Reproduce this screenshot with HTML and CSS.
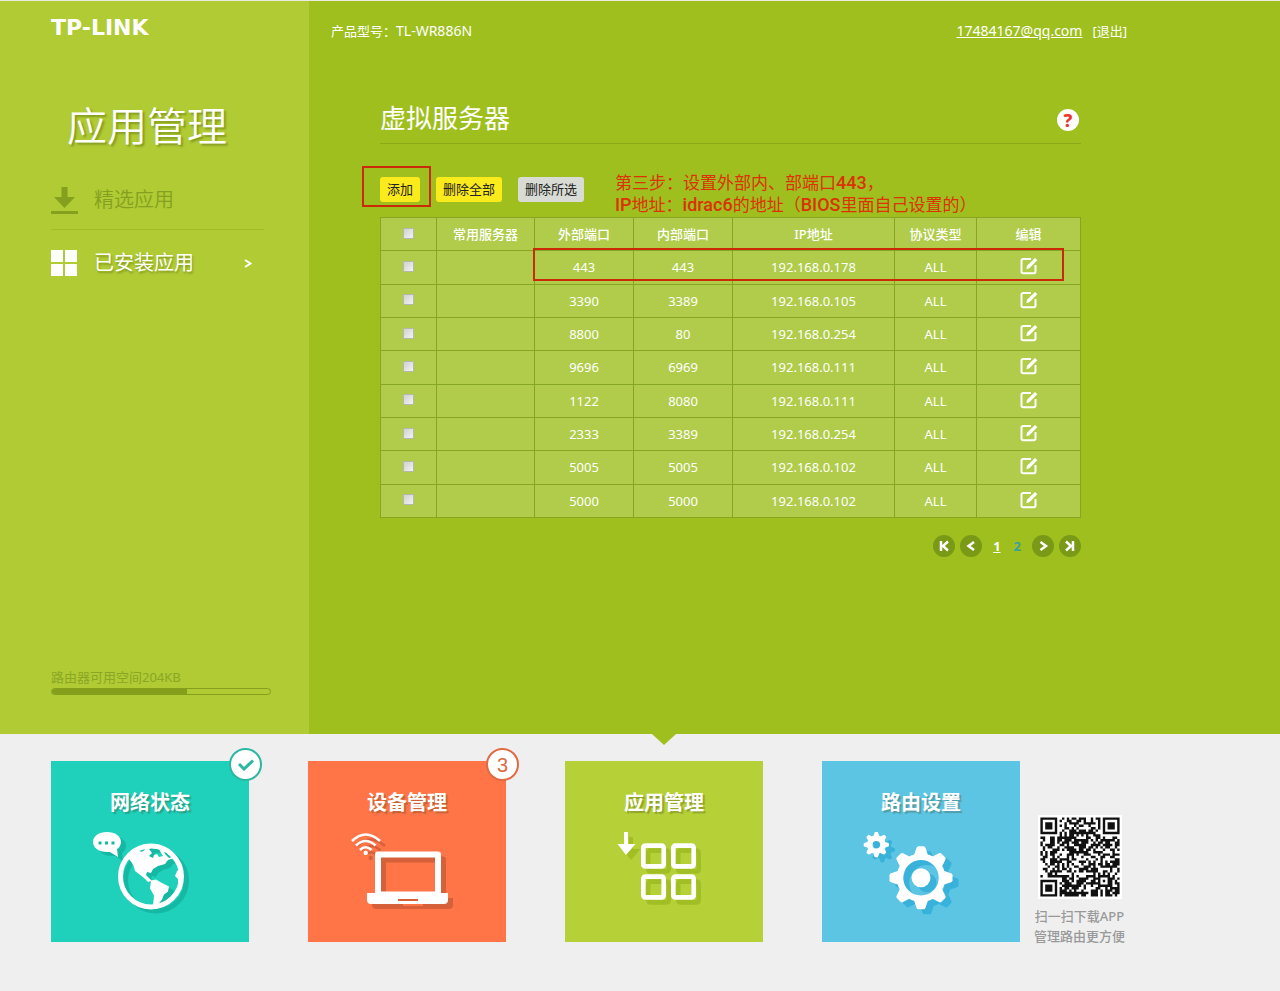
FILE: index.html
```html
<!DOCTYPE html>
<html lang="zh-CN">
<head>
<meta charset="utf-8">
<title>应用管理 - 虚拟服务器</title>
<link rel="stylesheet" href="styles.css">
</head>
<body>
<svg class="defs" aria-hidden="true">
  <symbol id="edit" viewBox="0 0 18 18"><path d="M11 2H3.200Q1.500 2 1.500 3.700V14.500Q1.500 16.200 3.200 16.200H13.800Q15.500 16.200 15.500 14.500V8" fill="none" stroke="currentColor" stroke-width="2"/><path d="M6.300 12.300 7 8.800 15 1 17.300 3.200 9.400 11.300Z" fill="currentColor"/></symbol>
</svg>
<div class="stage">
  <aside class="sidebar">
    <a class="logo" href="#">TP-LINK</a>
    <h1 class="sidebar-title">应用管理</h1>
    <nav class="menu">
      <a class="menu-item" href="#">
        <svg class="menu-icon" viewBox="0 0 27 27"><path d="M10.500 0h6v10h7.500L13.500 21 3 10h7.500zM0 24h27v3H0z"/></svg>
        <span>精选应用</span>
      </a>
      <a class="menu-item active" href="#">
        <svg class="menu-icon" viewBox="0 0 27 27"><path d="M0 0h12v12H0zM14 0h12v12H14zM0 14h12v12H0zM14 14h12v12H14z"/></svg>
        <span>已安装应用</span>
        <svg class="chevron" viewBox="0 0 8 9"><path d="M1 1 6.500 4.500 1 8" fill="none" stroke="currentColor" stroke-width="2"/></svg>
      </a>
    </nav>
    <div class="storage">
      <span>路由器可用空间204KB</span>
      <div class="bar"><div class="bar-fill" style="width:62%"></div></div>
    </div>
  </aside>
  <main class="main">
    <header class="topbar">
      <span>产品型号：<span class="model">TL-WR886N</span></span>
      <span class="account"><a class="mail" href="#">17484167@qq.com</a><a href="#">[退出]</a></span>
    </header>
    <section class="panel">
      <div class="panel-head">
        <h2>虚拟服务器</h2>
        <button class="help" aria-label="帮助">?</button>
      </div>
      <div class="actions">
        <button class="btn">添加</button>
        <button class="btn">删除全部</button>
        <button class="btn grey">删除所选</button>
        <div class="mark mark-add"></div>
        <p class="note">第三步：设置外部内、部端口<b>443</b>，<br><b>IP</b>地址：<b>idrac6</b>的地址（<b>BIOS</b>里面自己设置的）</p>
      </div>
      <div class="table-wrap">
        <table class="servers">
          <colgroup><col class="c-check"><col class="c-name"><col class="c-port"><col class="c-port"><col class="c-ip"><col class="c-type"><col></colgroup>
          <tbody>
            <tr><th><input type="checkbox" aria-label="全选"></th><th>常用服务器</th><th>外部端口</th><th>内部端口</th><th>IP地址</th><th>协议类型</th><th>编辑</th></tr>
            <tr><td><input type="checkbox" aria-label="选择443"></td><td></td><td>443</td><td>443</td><td>192.168.0.178</td><td>ALL</td><td><button class="edit" aria-label="编辑"><svg><use href="#edit"/></svg></button></td></tr>
            <tr><td><input type="checkbox" aria-label="选择3390"></td><td></td><td>3390</td><td>3389</td><td>192.168.0.105</td><td>ALL</td><td><button class="edit" aria-label="编辑"><svg><use href="#edit"/></svg></button></td></tr>
            <tr><td><input type="checkbox" aria-label="选择8800"></td><td></td><td>8800</td><td>80</td><td>192.168.0.254</td><td>ALL</td><td><button class="edit" aria-label="编辑"><svg><use href="#edit"/></svg></button></td></tr>
            <tr><td><input type="checkbox" aria-label="选择9696"></td><td></td><td>9696</td><td>6969</td><td>192.168.0.111</td><td>ALL</td><td><button class="edit" aria-label="编辑"><svg><use href="#edit"/></svg></button></td></tr>
            <tr><td><input type="checkbox" aria-label="选择1122"></td><td></td><td>1122</td><td>8080</td><td>192.168.0.111</td><td>ALL</td><td><button class="edit" aria-label="编辑"><svg><use href="#edit"/></svg></button></td></tr>
            <tr><td><input type="checkbox" aria-label="选择2333"></td><td></td><td>2333</td><td>3389</td><td>192.168.0.254</td><td>ALL</td><td><button class="edit" aria-label="编辑"><svg><use href="#edit"/></svg></button></td></tr>
            <tr><td><input type="checkbox" aria-label="选择5005"></td><td></td><td>5005</td><td>5005</td><td>192.168.0.102</td><td>ALL</td><td><button class="edit" aria-label="编辑"><svg><use href="#edit"/></svg></button></td></tr>
            <tr><td><input type="checkbox" aria-label="选择5000"></td><td></td><td>5000</td><td>5000</td><td>192.168.0.102</td><td>ALL</td><td><button class="edit" aria-label="编辑"><svg><use href="#edit"/></svg></button></td></tr>
          </tbody>
        </table>
        <div class="mark mark-row"></div>
      </div>
      <nav class="pager">
        <button aria-label="首页"><svg viewBox="0 0 22 22"><path d="M8 6v10M15 6.500 10 11l5 4.500"/></svg></button>
        <button aria-label="上一页"><svg viewBox="0 0 22 22"><path d="M14 7 8.500 11l5.500 4"/></svg></button>
        <span class="pages"><a class="current" href="#">1</a><a href="#">2</a></span>
        <button aria-label="下一页"><svg viewBox="0 0 22 22"><path d="M8.500 7 14 11l-5.500 4"/></svg></button>
        <button aria-label="末页"><svg viewBox="0 0 22 22"><path d="M14 6v10M7 6.500 12 11l-5 4.500"/></svg></button>
      </nav>
    </section>
  </main>
</div>
<footer class="dock">
  <a class="tile teal" href="#">
    <span class="tile-title">网络状态</span>
    <svg class="tile-icon" viewBox="0 0 120 100">
      <path fill-rule="evenodd" d="M17 10c8 0 14 4 14 10 0 3-2 6-4 7l1 8-8-5h-3C9 30 3 26 3 20s6-10 14-10zM8.500 19.500v3h3v-3zm6.500 0v3h3v-3zm6.500 0v3h3v-3z"/>
      <circle cx="61" cy="54.500" r="30.500" fill="none" stroke="#fff" stroke-width="5"/>
      <path fill-rule="evenodd" d="M37 36Q45 25 60 23q14 1 24 13l-6 2-3 4-7 2-5 3-2 4-4-1-1 3 3 3 3 3-4 1-4-4-5-4-4-3-1-4-2-4-3-4zM49 28l5-2 1 2-4 2zM59 27l4-2 2 2 4 0 2 4 2 3-4 1-2-3-3 1-1 3-4-2 3-3zM73 27l6 4 3 4-3 1-4-4z"/>
      <path d="M61 58.500l5-1 5 3 8 4-1 5-4 3-2 5-4 5-5 1 1-10-4-7zM92 46l-5 3-2 5 3 3v4l3 2z"/>
    </svg>
    <span class="badge"><svg viewBox="0 0 16 12"><path d="M1 5 6 10 15 1.500" fill="none" stroke="#2bb8a3" stroke-width="3"/></svg></span>
  </a>
  <a class="tile orange" href="#">
    <span class="tile-title">设备管理</span>
    <svg class="tile-icon" viewBox="0 0 120 100">
      <g fill="none" stroke="#fff" stroke-width="2.600"><path d="M5 19Q18.700 6 33 19"/><path d="M9 23.500Q18.700 14.500 28.500 23.500"/><path d="M13 28Q18.700 22.500 24.500 28"/></g>
      <circle cx="18.700" cy="31" r="2.200"/>
      <path fill-rule="evenodd" d="M31 29.500h60q3 0 3 3V71h7v7q0 4-4 4H24q-4 0-4-4v-7h8V32.500q0-3 3-3zM34 35.500v34h54v-34zM51 77v2h20v-2z"/>
    </svg>
    <span class="badge">3</span>
  </a>
  <a class="tile lime current" href="#">
    <span class="tile-title">应用管理</span>
    <svg class="tile-icon" viewBox="0 0 120 100">
      <path d="M20 10h4v12h7.500L22 33 13.500 22H20z"/>
      <g fill="none" stroke="#fff" stroke-width="4.600"><rect x="39.300" y="23.600" width="20.400" height="20.800" rx="2"/><rect x="69.300" y="23.600" width="20.400" height="20.800" rx="2"/><rect x="39.300" y="54.600" width="20.400" height="20.800" rx="2"/><rect x="69.300" y="54.600" width="20.400" height="20.800" rx="2"/></g>
    </svg>
  </a>
  <a class="tile blue" href="#">
    <span class="tile-title">路由设置</span>
    <svg class="tile-icon" viewBox="0 0 120 100">
      <defs>
        <path id="tooth" d="M-7.500-21-4.500-30Q-4-31.500-2.500-31.500H2.500Q4-31.500 4.500-30L7.500-21z"/>
        <g id="teeth"><use href="#tooth"/><use href="#tooth" transform="rotate(45)"/><use href="#tooth" transform="rotate(90)"/><use href="#tooth" transform="rotate(135)"/><use href="#tooth" transform="rotate(180)"/><use href="#tooth" transform="rotate(225)"/><use href="#tooth" transform="rotate(270)"/><use href="#tooth" transform="rotate(315)"/></g>
      </defs>
      <g transform="translate(15.300 22.700) scale(.4)"><use href="#teeth"/><circle r="16.500" fill="none" stroke="#fff" stroke-width="14"/></g>
      <g transform="translate(60 55.700)"><use href="#teeth"/><circle r="21" fill="none" stroke="#fff" stroke-width="6.500"/><circle r="9.500"/></g>
    </svg>
  </a>
  <div class="download">
    <svg class="qr" id="qr" viewBox="-1 -1 35 35" role="img" aria-label="二维码"></svg>
    <span>扫一扫下载APP</span>
    <span>管理路由更方便</span>
  </div>
</footer>
<script src="qr.js"></script>
</body>
</html>
```
FILE: styles.css
```css
* { box-sizing: border-box; }
body {
  margin: 0;
  min-height: 100vh;
  display: flex;
  flex-direction: column;
  background: #efefef;
  border-top: 1px solid #e9ecdf;
  color: #fff;
  font: 13px/20px "Noto Sans", "Noto Sans CJK SC", sans-serif;
}
a { color: inherit; text-decoration: none; }
button { font: inherit; border: 0; padding: 0; cursor: pointer; }
h1, h2, p { margin: 0; font-weight: 400; }
.defs { position: absolute; width: 0; height: 0; }

.stage { flex: 1; display: flex; background: #9ebf1d; }
.sidebar {
  flex: none;
  width: 309px;
  padding: 15px 38px 39px 51px;
  display: flex;
  flex-direction: column;
  background: #b0cb34;
}
.logo { font: bold 22px/24px "DejaVu Sans", sans-serif; }
.sidebar-title {
  margin-top: 55px;
  padding-left: 16px;
  font-family: "Noto Sans CJK SC", sans-serif;
  font-size: 40px;
  font-weight: 350;
  line-height: 58px;
  text-shadow: 2px 2px 2px rgba(90, 110, 10, .5);
}
.menu { margin-top: 18px; width: 213px; }
.menu-item {
  display: flex;
  align-items: center;
  gap: 16px;
  height: 58px;
  color: #85a01f;
  font-size: 20px;
  font-weight: 350;
}
.menu-item + .menu-item { height: 67px; border-top: 1px solid #a2bd2c; }
.menu-item.active { color: #fff; font-weight: 400; text-shadow: 1px 2px 2px rgba(90, 110, 10, .5); }
.menu-icon { width: 27px; height: 27px; fill: currentColor; }
.chevron { width: 8px; height: 9px; margin-left: auto; margin-right: 12px; }
.storage { margin-top: auto; color: #8ba625; }
.bar { height: 7px; margin-top: 1px; border: 1px solid #859f1d; border-radius: 4px; overflow: hidden; }
.bar-fill { height: 100%; background: #859f1d; }

.main { flex: 1; padding: 20px 24px 24px 22px; }
.topbar { display: flex; justify-content: space-between; max-width: 796px; }
.account { display: flex; gap: 10px; }
.model, .mail { font-size: 14px; }
.mail { text-decoration: underline; }
.panel { max-width: 750px; padding-left: 49px; }
.panel-head {
  display: flex;
  justify-content: space-between;
  align-items: center;
  height: 48px;
  margin-top: 55px;
  padding-right: 2px;
  border-bottom: 1px solid #8aaa18;
}
h2 { font-size: 26px; line-height: 36px; padding-bottom: 4px; }
.help {
  width: 22px;
  height: 22px;
  border-radius: 50%;
  background: #fff;
  color: #e8392b;
  font-size: 18px;
  font-weight: 800;
  line-height: 22px;
}
.actions { position: relative; display: flex; gap: 16px; margin-top: 33px; }
.btn { height: 25px; padding: 0 7px 2px; border-radius: 3px; background: #fbea1c; color: #222; }
.btn.grey { background: #d9dcd4; }
.mark { position: absolute; border: 2px solid #cb2a08; pointer-events: none; }
.mark-add { left: -18px; top: -11px; width: 69px; height: 41px; }
.note {
  position: absolute;
  left: 235px;
  top: -5px;
  color: #dc3200;
  font-family: Roboto, "Noto Sans CJK SC", sans-serif;
  font-size: 17px;
  line-height: 21px;
  white-space: nowrap;
}
.note b { font-size: 18px; font-weight: 500; }

.table-wrap { position: relative; margin-top: 15px; }
.servers {
  width: 100%;
  height: 301px;
  table-layout: fixed;
  border-collapse: collapse;
  background: #b0cc4a;
}
.servers tr { height: 33px; }
.c-check { width: 56px; }
.c-name { width: 98px; }
.c-port { width: 99px; }
.c-ip { width: 162px; }
.c-type { width: 82px; }
.servers th, .servers td {
  padding: 0;
  border: 1px solid #86a522;
  text-align: center;
  vertical-align: middle;
  font-weight: 400;
}
.servers th { font-weight: 500; }
.servers input {
  appearance: none;
  display: block;
  width: 11px;
  height: 11px;
  margin: 0 auto 2px;
  border: 1px solid #b5b9ad;
  border-radius: 1px;
  background: linear-gradient(135deg, #cfd2d0, #f2f2f2);
}
.edit { display: block; width: 18px; height: 18px; margin: 0 auto 2px; background: none; color: #fff; }
.edit svg { display: block; width: 18px; height: 18px; }
.mark-row { left: 153px; top: 31px; right: 17px; height: 33px; }

.pager { display: flex; justify-content: flex-end; align-items: center; gap: 5px; margin-top: 17px; }
.pager button { width: 22px; height: 22px; border-radius: 50%; background: #7a9916; }
.pager button svg { display: block; fill: none; stroke: #fff; stroke-width: 2.5; }
.pages { display: flex; gap: 13px; margin: 0 6px; font-weight: 700; color: #3d9f9a; }
.pages .current { color: #fff; text-decoration: underline; }

.dock { display: flex; gap: 59px; padding: 27px 51px 45px; }
.tile {
  position: relative;
  flex: none;
  width: 198px;
  height: 181px;
  display: flex;
  flex-direction: column;
  align-items: center;
  padding-top: 28px;
}
.tile-title { font-size: 20px; font-weight: 700; line-height: 28px; margin-bottom: 5px; text-shadow: 2px 2px 1px rgba(60, 60, 20, .3); }
.tile-icon { width: 120px; height: 100px; fill: #fff; overflow: visible; }
.teal { background: #1fd0bb; }
.teal .tile-icon { filter: drop-shadow(5px 4px 0 #14b8a3); }
.orange { background: #ff7547; }
.orange .tile-icon { filter: drop-shadow(5px 5px 0 #d6603a); }
.lime { background: #b6d137; }
.lime .tile-icon { filter: drop-shadow(5px 5px 0 #a1bf25); }
.blue { background: #5cc5e3; }
.blue .tile-icon { filter: drop-shadow(6px 5px 0 #38b2da); }
.tile.current::before {
  content: "";
  position: absolute;
  top: -27px;
  left: 50%;
  margin-left: -12px;
  border: 12px solid transparent;
  border-top: 11px solid #9ebf1d;
  border-bottom: 0;
}
.badge {
  position: absolute;
  top: -13px;
  right: -13px;
  width: 33px;
  height: 33px;
  display: grid;
  place-items: center;
  border: 2px solid #2bb8a3;
  border-radius: 50%;
  background: #fff;
  font: 20px/28px "Liberation Sans", sans-serif;
}
.badge svg { width: 16px; height: 12px; }
.orange .badge { border-color: #e06a42; color: #d96a45; }
.download {
  display: flex;
  flex-direction: column;
  align-items: center;
  margin-left: -45px;
  padding-top: 54px;
  color: #999;
  font-weight: 500;
  white-space: nowrap;
}
.qr { width: 84px; height: 84px; margin-bottom: 7px; background: #fff; }
```
FILE: qr.js
```js
(function () {
  var size = 33, seed = 886, d = "";
  function next() {
    seed = (seed * 1103515245 + 12345) % 2147483648;
    return seed / 2147483648;
  }
  function ring(x, y, cx, cy) {
    return Math.max(Math.abs(x - cx), Math.abs(y - cy));
  }
  var finders = [[3, 3], [29, 3], [3, 29]];
  for (var y = 0; y < size; y++) {
    for (var x = 0; x < size; x++) {
      var on = next() > 0.42;
      finders.forEach(function (f) {
        var r = ring(x, y, f[0], f[1]);
        if (r <= 4) on = r !== 2 && r !== 4;
      });
      var a = ring(x, y, 26, 26);
      if (a <= 2) on = a !== 1;
      if (on) d += "M" + x + " " + y + "h1v1h-1z";
    }
  }
  var path = document.createElementNS("http://www.w3.org/2000/svg", "path");
  path.setAttribute("d", d);
  path.setAttribute("fill", "#111");
  document.getElementById("qr").appendChild(path);
})();
```
